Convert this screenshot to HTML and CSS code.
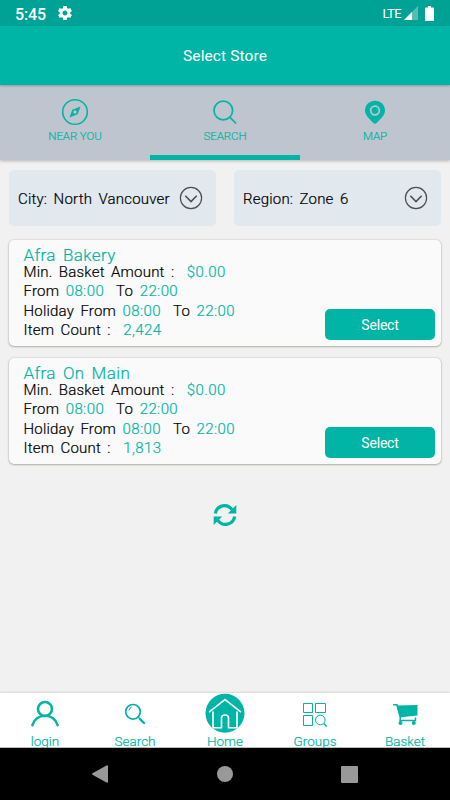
FILE: index.html
```html
<!DOCTYPE html>
<html lang="en">
<head>
<meta charset="utf-8">
<title>Select Store</title>
<link rel="stylesheet" href="styles.css">
</head>
<body>
<div class="status">
  <span class="clock">5:45</span>
  <svg class="gear" width="14" height="14" viewBox="2 2 20 20"><path fill="#fff" d="M19.43 12.98c.04-.32.07-.64.07-.98s-.03-.66-.07-.98l2.11-1.65c.19-.15.24-.42.12-.64l-2-3.46c-.12-.22-.39-.3-.61-.22l-2.49 1c-.52-.4-1.08-.73-1.69-.98l-.38-2.65C14.46 2.18 14.25 2 14 2h-4c-.25 0-.46.18-.49.42l-.38 2.65c-.61.25-1.17.59-1.69.98l-2.49-1c-.23-.09-.49 0-.61.22l-2 3.46c-.13.22-.07.49.12.64l2.11 1.65c-.04.32-.07.65-.07.98s.03.66.07.98l-2.11 1.65c-.19.15-.24.42-.12.64l2 3.46c.12.22.39.3.61.22l2.49-1c.52.4 1.08.73 1.69.98l.38 2.65c.03.24.24.42.49.42h4c.25 0 .46-.18.49-.42l.38-2.65c.61-.25 1.17-.59 1.69-.98l2.49 1c.23.09.49 0 .61-.22l2-3.46c.12-.22.07-.49-.12-.64l-2.11-1.65zM12 15.5c-1.93 0-3.5-1.57-3.5-3.500s1.570-3.500 3.500-3.500 3.500 1.570 3.500 3.500-1.570 3.500-3.500 3.500z"/></svg>
  <span class="lte">LTE</span>
  <svg class="signal" width="14" height="14" viewBox="0 0 14 14"><path fill="#55bdb1" d="M14 0v14H0z"/><path fill="#fff" d="M8 6v8H0z"/></svg>
  <svg width="9" height="15" viewBox="0 0 9 15"><path fill="#fff" d="M3 0h3v1.500h2q1 0 1 1V14q0 1-1 1H1q-1 0-1-1V2.500q0-1 1-1h2z"/></svg>
</div>
<header class="header">Select Store</header>
<nav class="tabs">
  <div class="tab">
    <svg width="28" height="28" viewBox="0 0 28 28"><circle cx="14" cy="14" r="12.300" fill="none" stroke="#00b5a5" stroke-width="1.600"/><path fill="#00b5a5" fill-rule="evenodd" d="M19.500 8.500 16.700 16.200 8.500 19.500 11.300 11.800zM14 12.300a1.700 1.700 0 1 0 0 3.400 1.700 1.700 0 0 0 0-3.400z"/></svg>
    <span>NEAR YOU</span>
  </div>
  <div class="tab active">
    <svg width="28" height="28" viewBox="0 0 28 28"><circle cx="12.300" cy="12.500" r="9.300" fill="none" stroke="#00b5a5" stroke-width="1.700"/><path d="m18.800 19.200 6.300 6.300" stroke="#00b5a5" stroke-width="1.700"/></svg>
    <span>SEARCH</span>
  </div>
  <div class="tab">
    <svg width="28" height="28" viewBox="0 0 28 28"><path fill="#00b5a5" d="M14 2.700C8.200 2.700 4 7 4 12.500c0 5 5 9 8.500 12.600q1.500 1.600 3 0C19 21.500 24 17.500 24 12.500 24 7 19.800 2.700 14 2.700z"/><circle cx="14" cy="12.500" r="4.300" fill="none" stroke="#bec5cf" stroke-width="1.700"/></svg>
    <span>MAP</span>
  </div>
</nav>
<main class="main">
  <div class="filters">
    <div class="filter"><span>City: North Vancouver</span><svg width="24" height="24" viewBox="0 0 24 24" fill="none" stroke="#4b4e52"><circle cx="12" cy="12" r="10.600" stroke-width="1.200"/><path d="m6.300 9.800 5.700 5.700 5.700-5.700" stroke-width="1.600"/></svg></div>
    <div class="filter"><span>Region: Zone 6</span><svg width="24" height="24" viewBox="0 0 24 24" fill="none" stroke="#4b4e52"><circle cx="12" cy="12" r="10.600" stroke-width="1.200"/><path d="m6.300 9.800 5.700 5.700 5.700-5.700" stroke-width="1.600"/></svg></div>
  </div>
  <section class="card">
    <div class="info">
      <h2>Afra Bakery</h2>
      <p>Min. Basket Amount :<b class="wide">$0.00</b></p>
      <p>From<b>08:00</b><i>To</i><b>22:00</b></p>
      <p>Holiday From<b>08:00</b><i>To</i><b>22:00</b></p>
      <p>Item Count :<b class="wide">2,424</b></p>
    </div>
    <button class="select">Select</button>
  </section>
  <section class="card">
    <div class="info">
      <h2>Afra On Main</h2>
      <p>Min. Basket Amount :<b class="wide">$0.00</b></p>
      <p>From<b>08:00</b><i>To</i><b>22:00</b></p>
      <p>Holiday From<b>08:00</b><i>To</i><b>22:00</b></p>
      <p>Item Count :<b class="wide">1,813</b></p>
    </div>
    <button class="select">Select</button>
  </section>
  <svg class="refresh" width="24" height="24" viewBox="0 0 24 24"><path fill="none" stroke="#00b5a5" stroke-width="3.200" d="M2.300 10.500C4 1.800 14.500 0 19 6.700M21.700 13.500C20 22.200 9.500 24 5 17.300"/><path fill="#00b5a5" d="M23.300 2v8.500h-8.500zM.7 22v-8.500h8.500z"/></svg>
</main>
<nav class="bottom">
  <div class="item"><svg width="40" height="40" viewBox="0 0 40 40" fill="none" stroke="#00b5a5" stroke-width="2.600" stroke-linecap="round"><circle cx="20" cy="16" r="7"/><path d="M7.400 32.200C11 19.500 29 19.500 32.600 32.200"/></svg><span>login</span></div>
  <div class="item"><svg width="40" height="40" viewBox="0 0 40 40" fill="none" stroke="#00b5a5"><circle cx="18" cy="18.800" r="7.300" stroke-width="1.700"/><path d="M14 17.500q.5-2.500 2.500-3.500" stroke-width="1"/><path d="m23.400 24.200 1.800 1.800" stroke-width="1.500"/><path d="m25 26 4 4" stroke-width="2.400" stroke-linecap="round"/></svg><span>Search</span></div>
  <div class="item"><svg width="40" height="40" viewBox="0 0 40 40"><circle cx="20" cy="20.300" r="19.500" fill="#00b5a5"/><path fill="none" stroke="#fff" stroke-width="1.600" d="m4 19.200 16-12.700 16 12.700M8 18.500v16.200h8.500V25q0-3 3.500-3t3.500 3v9.700H32V18.500"/></svg><span>Home</span></div>
  <div class="item"><svg width="40" height="40" viewBox="0 0 40 40" fill="none" stroke="#00b5a5" stroke-width="1"><path d="M8.500 10.500h9v9h-9zM20.500 10.500h10v9h-10zM8.500 22.500h9v10h-9z"/><circle cx="25.300" cy="27" r="4.800"/><path d="m28.700 30.500 3 3" stroke-width="1.400"/></svg><span>Groups</span></div>
  <div class="item"><svg width="40" height="40" viewBox="0 0 40 40"><path fill="#00b5a5" d="M11.500 12.500l21-.5v10.500l-18 2z"/><path fill="none" stroke="#00b5a5" stroke-width="1.500" d="M8 11.700h4l3.500 12.500-.5 3.200h15.500v-3"/><circle cx="15.500" cy="30" r="2" fill="#00b5a5"/><circle cx="28.800" cy="30" r="2" fill="#00b5a5"/></svg><span>Basket</span></div>
</nav>
<footer class="system">
  <svg width="16" height="18" viewBox="0 0 16 18"><path fill="#999" d="M16 1v16q0 1-1 .7L.5 9.700q-.8-.7 0-1.400L15 .3q1-.3 1 .7z"/></svg>
  <svg width="16" height="16" viewBox="0 0 16 16"><circle cx="8" cy="8" r="8" fill="#999"/></svg>
  <svg width="17" height="17" viewBox="0 0 17 17"><rect width="17" height="17" rx="1" fill="#999"/></svg>
</footer>
</body>
</html>
```
FILE: styles.css
```css
* { box-sizing: border-box; }
body {
  margin: 0;
  width: 450px;
  height: 800px;
  overflow: hidden;
  display: flex;
  flex-direction: column;
  background: #f1f1f1;
  font-family: Roboto, "Liberation Sans", sans-serif;
}
svg { display: block; flex: none; }
.status {
  height: 26px;
  flex: none;
  background: #00a295;
  color: #fff;
  display: flex;
  align-items: center;
  padding: 0 16px 0 15px;
}
.clock { font-size: 16px; font-weight: 500; letter-spacing: -.1px; width: 43px; padding-top: 2px; }
.lte { margin-left: auto; font-size: 13px; letter-spacing: -.6px; }
.signal { margin: 0 7px 0 3px; }
.header {
  height: 59px;
  flex: none;
  background: #00b5a5;
  color: #fff;
  font-size: 15.500px;
  letter-spacing: .1px;
  display: flex;
  align-items: center;
  justify-content: center;
  position: relative;
  box-shadow: 0 1px 2px rgba(0, 0, 0, .25);
}
.tabs {
  height: 75px;
  flex: none;
  display: flex;
  background: #bec5cf;
  box-shadow: 0 1px 3px rgba(0, 0, 0, .25);
}
.tab {
  flex: 1;
  display: flex;
  flex-direction: column;
  align-items: center;
  padding-top: 13px;
  color: #00b5a5;
  font-size: 11.500px;
  font-weight: 300;
  line-height: 14px;
  letter-spacing: -.1px;
}
.tab, .filter, .info, .item { -webkit-text-stroke: .2px; }
.tab span { margin-top: 3px; }
.active { border-bottom: 5px solid #00b5a5; }
.main { flex: 1; padding: 10px 9px 0; display: flex; flex-direction: column; }
.filters { display: grid; grid-template-columns: 1fr 1fr; gap: 18px; height: 56px; margin-bottom: 14px; }
.filter {
  display: flex;
  align-items: center;
  justify-content: space-between;
  padding: 0 13px 0 9px;
  border-radius: 5px;
  background: #e1e8ee;
  color: #000;
  font-size: 15px;
  font-weight: 300;
  letter-spacing: .2px;
  word-spacing: 2.500px;
  white-space: nowrap;
}
.filter span { padding-top: 1px; }
.card {
  height: 106px;
  flex: none;
  display: flex;
  justify-content: space-between;
  align-items: flex-end;
  padding: 0 6px 6px 14.500px;
  margin-bottom: 12px;
  background: #fafafa;
  border-radius: 5px;
  box-shadow: 0 0 2px rgba(90, 90, 60, .35), 0 1px 2px rgba(90, 90, 60, .35);
}
.info { color: #000; font-size: 15px; font-weight: 300; letter-spacing: .2px; word-spacing: 2.500px; }
h2, p { margin: 0; white-space: nowrap; }
h2 { font-size: 17px; font-weight: 300; line-height: 16px; color: #00b5a5; letter-spacing: .4px; }
p { line-height: 19.200px; }
b, i { font-weight: 300; font-style: normal; }
b { color: #00b5a5; margin-left: 6.500px; letter-spacing: .4px; }
i { margin-left: 12px; }
.wide { margin-left: 12.500px; }
.select {
  width: 110px;
  height: 31px;
  border: 0;
  border-radius: 5px;
  background: #00b5a5;
  color: #fff;
  font: 400 14px Roboto, "Liberation Sans", sans-serif;
  letter-spacing: -.2px;
  -webkit-text-stroke: 0;
}
.refresh { margin: 27px auto 0; }
.bottom {
  height: 55px;
  flex: none;
  display: flex;
  background: #fff;
  border-bottom: 1px solid #b5bdbd;
  box-shadow: 0 -1px 2px rgba(0, 0, 0, .1);
}
.item {
  flex: 1;
  height: 54px;
  display: flex;
  flex-direction: column;
  align-items: center;
  color: #00b5a5;
  font-size: 13.500px;
  font-weight: 300;
  line-height: 16px;
  letter-spacing: 0;
}
.system {
  height: 52px;
  flex: none;
  background: #000;
  display: grid;
  grid-template-columns: 125px 125px 125px;
  justify-content: center;
  justify-items: center;
  align-items: center;
  padding-right: 1px;
}
```
